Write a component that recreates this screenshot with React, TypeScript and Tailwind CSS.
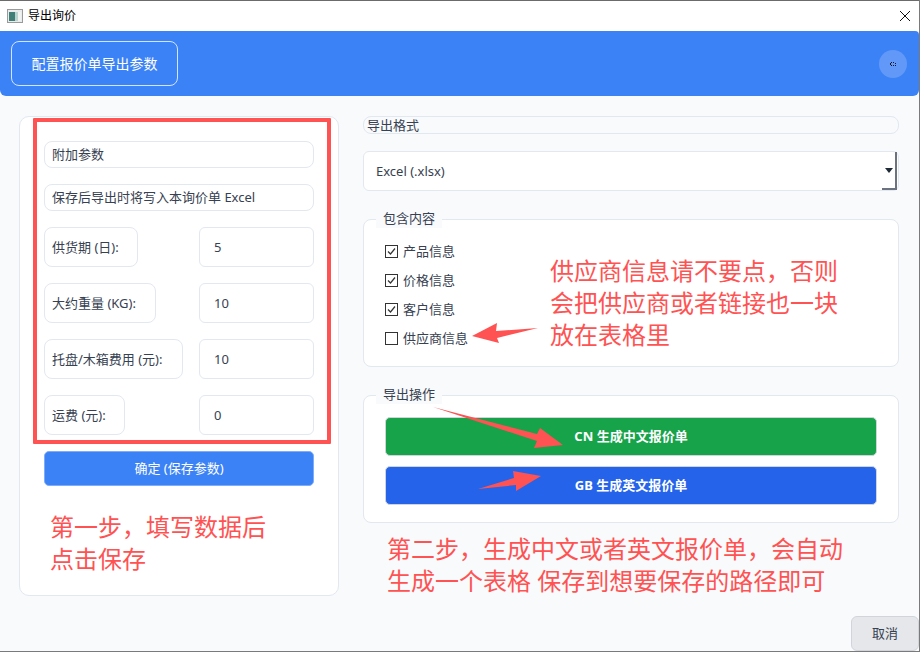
import React from 'react';

const fieldRows = [
  { label: '供货期 (日):', value: '5', width: 'w-[94px]' },
  { label: '大约重量 (KG):', value: '10', width: 'w-[112px]' },
  { label: '托盘/木箱费用 (元):', value: '10', width: 'w-[139px]' },
  { label: '运费 (元):', value: '0', width: 'w-[81px]' },
];

const includeRows = [
  { label: '产品信息', checked: true },
  { label: '价格信息', checked: true },
  { label: '客户信息', checked: true },
  { label: '供应商信息', checked: false },
];

function CheckRow({ label, checked }: { label: string; checked: boolean }) {
  return (
    <div className="flex h-[29px] items-center gap-[5px]">
      <div className="flex h-[13px] w-[13px] items-center justify-center border border-[#333333] bg-white">
        {checked && (
          <svg width="11" height="11" viewBox="0 0 11 11" fill="none">
            <path d="M2 5.5 L4.5 8 L9 2.5" stroke="#333333" strokeWidth="1.2" />
          </svg>
        )}
      </div>
      <span className="text-[13px] text-[#374151]">{label}</span>
    </div>
  );
}

function GroupBox({ title, className, children }: { title: string; className: string; children: React.ReactNode }) {
  return (
    <div className={`relative rounded-[8px] border border-[#e2e8f0] bg-white ${className}`}>
      <span className="absolute left-[12px] top-[-12px] bg-[#f8fafc] px-[7px] text-[13px] leading-[20px] text-[#374151]">
        {title}
      </span>
      {children}
    </div>
  );
}

export default function App() {
  return (
    <div className="relative h-[653px] w-[921px] overflow-hidden bg-white font-['Noto_Sans','Noto_Sans_CJK_SC',sans-serif]">
      <div className="flex h-[652px] w-[920px] flex-col border-b border-r border-[#7a7a7a] bg-[#f8fafc]">
        {/* Title bar */}
        <div className="flex h-[31px] items-center justify-between border-t border-[#6b6b6b] bg-white pl-[7px] pr-[8px]">
          <div className="flex items-center gap-[5px]">
            <svg width="16" height="14" viewBox="0 0 16 14">
              <rect x="0.5" y="0.5" width="15" height="13" fill="#e8ecec" stroke="#9a9a9a" />
              <rect x="2" y="3" width="6" height="9" fill="#3f7f78" />
              <rect x="8" y="3" width="3" height="9" fill="#b9d3cf" />
              <rect x="11" y="3" width="3" height="9" fill="#f0f3f0" />
            </svg>
            <span className="text-[12px] text-black">导出询价</span>
          </div>
          <svg width="12" height="12" viewBox="0 0 12 12" fill="none">
            <path d="M1 1 L11 11 M11 1 L1 11" stroke="#111111" strokeWidth="1" />
          </svg>
        </div>

        {/* Blue header */}
        <div className="flex h-[65px] items-center justify-between rounded-b-[6px] rounded-tr-[4px] bg-[#3b82f6] pl-[11px] pr-[12px]">
          <div className="flex h-[45px] w-[167px] items-center justify-center rounded-[8px] border border-[#d5e4fd] text-[14px] text-white">
            配置报价单导出参数
          </div>
          <div className="flex h-[28px] w-[28px] items-center justify-center rounded-full bg-[#6299f8]">
            <svg width="6" height="4" viewBox="0 0 6 4" shapeRendering="crispEdges">
              <path d="M1 0h1v1H1z M3 0h1v1H3z M0 1h1v1H0z M5 1h1v1H5z M1 3h1v1H1z M3 3h1v1H3z M5 3h1v1H5z M0 2h1v1H0z" fill="#111827" />
            </svg>
          </div>
        </div>

        {/* Main content */}
        <div className="flex flex-1 gap-[24px] pl-[19px] pt-[20px]">
          <div className="flex h-[480px] w-[320px] flex-col rounded-[10px] border border-[#e2e8f0] bg-white px-[24px] pt-[24px]">
            <div className="flex h-[27px] items-center rounded-[8px] border border-[#e2e8f0] px-[7px] pt-[1px] text-[13px] text-[#374151]">
              附加参数
            </div>
            <div className="mt-[16px] flex h-[27px] items-center rounded-[8px] border border-[#e2e8f0] px-[7px] pt-[1px] text-[13px] text-[#374151]">
              保存后导出时将写入本询价单 Excel
            </div>
            {fieldRows.map((row) => (
              <div key={row.label} className="mt-[16px] flex h-[40px] justify-between">
                <div className={`flex items-center rounded-[8px] border border-[#e2e8f0] px-[7px] pt-[1px] text-[13px] text-[#374151] ${row.width}`}>
                  <span className="whitespace-nowrap">{row.label}</span>
                </div>
                <div className="flex w-[115px] items-center rounded-[6px] border border-[#e2e8f0] pl-[14px] pt-[1px] text-[13px] text-[#374151]">
                  {row.value}
                </div>
              </div>
            ))}
            <div className="mt-[16px] flex h-[35px] items-center justify-center rounded-[5px] border border-[#7fabf8] bg-[#3b82f6] pt-[1px] text-[13px] text-white">
              确定 (保存参数)
            </div>
          </div>

          <div className="flex w-[536px] flex-col">
            <div className="flex h-[18px] items-center rounded-[8px] border border-[#e2e8f0] pl-[3px] pt-[2px] text-[13px] text-[#374151]">
              导出格式
            </div>
            <div className="mt-[17px] flex h-[40px] items-center justify-between rounded-[6px] border border-[#e2e8f0] bg-white pl-[12px] text-[13px] text-[#374151]">
              <span className="pt-[2px]">Excel (.xlsx)</span>
              <div className="mr-px flex h-full w-[15px] items-center justify-center border-b-2 border-r-2 border-[#6b7280]">
                <svg width="8" height="5" viewBox="0 0 8 5">
                  <path d="M0 0 H8 L4 5 Z" fill="#1f2937" />
                </svg>
              </div>
            </div>

            <GroupBox title="包含内容" className="mt-[28px] h-[148px] pl-[21px] pt-[17px]">
              {includeRows.map((row) => (
                <CheckRow key={row.label} label={row.label} checked={row.checked} />
              ))}
            </GroupBox>

            <GroupBox title="导出操作" className="mt-[28px] flex h-[128px] flex-col gap-[10px] px-[21px] pt-[21px]">
              <div className="flex h-[39px] items-center justify-center rounded-[5px] border border-[#d1d5db] bg-[#16a34a] text-[13px] font-bold text-white">
                CN 生成中文报价单
              </div>
              <div className="flex h-[39px] items-center justify-center rounded-[5px] border border-[#d1d5db] bg-[#2563eb] text-[13px] font-bold text-white">
                GB 生成英文报价单
              </div>
            </GroupBox>
          </div>
        </div>

        {/* Footer */}
        <div className="flex h-[35px] justify-end">
          <div className="flex h-[35px] w-[68px] items-center justify-center rounded-[6px] border border-[#d1d5db] bg-[#e5e7eb] text-[13px] text-[#374151]">
            取消
          </div>
        </div>
      </div>

      {/* Red annotations drawn on top of the dialog */}
      <div className="absolute left-[33px] top-[118px] h-[326px] w-[298px] rounded-[1px] border-[4px] border-[#ff5252]" />
      <div className="absolute left-[50px] top-[511px] text-[24px] leading-[32px] text-[#ff5252]">
        <div>第一步，填写数据后</div>
        <div>点击保存</div>
      </div>
      <div className="absolute left-[550px] top-[255px] text-[24px] leading-[32px] text-[#ff5252]">
        <div>供应商信息请不要点，否则</div>
        <div>会把供应商或者链接也一块</div>
        <div>放在表格里</div>
      </div>
      <div className="absolute left-[387px] top-[533px] whitespace-nowrap text-[24px] leading-[32px] text-[#ff5252]">
        <div>第二步，生成中文或者英文报价单，会自动</div>
        <div>生成一个表格 保存到想要保存的路径即可</div>
      </div>
      <svg className="pointer-events-none absolute left-0 top-0" width="921" height="653" viewBox="0 0 921 653">
        <polygon points="472,336 497,323 496,331 538,328 497,338 499,343" fill="#ff5252" />
        <polygon points="433,407 537,434 540,428 563,445 534,448 537,441" fill="#ff5252" />
        <polygon points="478,489 514,478 513,471 541,476 516,491 516,485" fill="#ff5252" />
      </svg>
    </div>
  );
}
